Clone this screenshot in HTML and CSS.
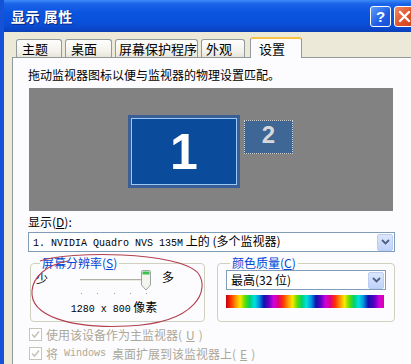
FILE: index.html
```html
<!DOCTYPE html>
<html lang="zh-CN">
<head>
<meta charset="utf-8">
<title>显示 属性</title>
<link rel="stylesheet" href="styles.css">
</head>
<body>
<div class="window">
  <div class="titlebar">
    <span class="title">显示 属性</span>
    <div class="tbtns">
      <span class="tbtn help">?</span>
      <span class="tbtn close">
        <svg width="19" height="19" viewBox="0 0 19 19"><path d="M5 5 L14 14 M14 5 L5 14" stroke="#fff" stroke-width="2.4" stroke-linecap="round"/></svg>
      </span>
    </div>
  </div>
  <div class="content">
    <div class="tabs">
      <span class="tab w1">主题</span>
      <span class="tab w2">桌面</span>
      <span class="tab w3">屏幕保护程序</span>
      <span class="tab w4">外观</span>
      <span class="tab active">设置</span>
    </div>
    <div class="panel">
      <p class="hint">拖动监视器图标以便与监视器的物理设置匹配。</p>
      <div class="canvas">
        <div class="mon1"><div class="mon1-inner">1</div></div>
        <div class="mon2">2</div>
      </div>
      <div class="label">显示(<u>D</u>):</div>
      <div class="select wide">
        <span class="sel-text"><span class="mono">1. NVIDIA Quadro NVS 135M</span> 上的 (多个监视器)</span>
        <span class="drop"><svg width="9" height="6" viewBox="0 0 9 6"><path d="M1 1 L4.5 4.5 L8 1" fill="none" stroke="#4d6185" stroke-width="1.8"/></svg></span>
      </div>
      <div class="groups">
        <fieldset class="group">
          <legend>屏幕分辨率(<u>S</u>)</legend>
          <div class="slider-row">
            <span class="lo">少</span>
            <div class="slider">
              <div class="track"></div>
              <div class="thumb"><svg width="10" height="21" viewBox="0 0 10 21"><path d="M0.5 1.5 Q0.5 0.5 1.5 0.5 H8.5 Q9.5 0.5 9.5 1.5 V15 L5 20 L0.5 15 Z" fill="#f4f4ee" stroke="#9aa5a0"/><rect x="1.5" y="1.5" width="7" height="3" fill="#3fbf4f"/></svg></div>
              <div class="ticks"><i></i><i></i><i></i><i></i><i></i></div>
            </div>
            <span class="hi">多</span>
          </div>
          <div class="res"><span class="mono">1280 x 800</span> 像素</div>
        </fieldset>
        <fieldset class="group">
          <legend>颜色质量(<u>C</u>)</legend>
          <div class="select small">
            <span class="sel-text">最高(32 位)</span>
            <span class="drop"><svg width="9" height="6" viewBox="0 0 9 6"><path d="M1 1 L4.5 4.5 L8 1" fill="none" stroke="#4d6185" stroke-width="1.8"/></svg></span>
          </div>
          <div class="spectrum"></div>
        </fieldset>
      </div>
      <div class="check"><span class="box"><svg width="11" height="11" viewBox="0 0 11 11"><path d="M2 5.5 L4.5 8 L9 2.5" fill="none" stroke="#c6c4b8" stroke-width="1.6"/></svg></span>使用该设备作为主监视器(<u>U</u>)</div>
      <div class="check"><span class="box"><svg width="11" height="11" viewBox="0 0 11 11"><path d="M2 5.5 L4.5 8 L9 2.5" fill="none" stroke="#c6c4b8" stroke-width="1.6"/></svg></span>将 <span class="mono">Windows</span> 桌面扩展到该监视器上(<u>E</u>)</div>
    </div>
  </div>
  <svg class="ring" width="180" height="80" viewBox="0 0 180 80"><path d="M12 8 C 40 -2, 150 -2, 170 20 C 182 36, 170 70, 100 73 C 40 76, 2 62, 4 38 C 5 24, 18 12, 40 8" fill="none" stroke="#b24050" stroke-width="1.1"/></svg>
</div>
</body>
</html>
```

FILE: styles.css
```css
* { box-sizing: border-box; }
html, body { margin: 0; padding: 0; }
body {
  width: 411px;
  height: 364px;
  overflow: hidden;
  font-family: "Noto Sans CJK SC", "Liberation Sans", sans-serif;
  font-size: 12px;
  color: #000;
  background: #ece9d8;
}
u { text-decoration: underline; }
.mono { font-family: "Liberation Mono", monospace; font-size: 10px; }
.window {
  position: relative;
  width: 411px;
  height: 364px;
  background: #ece9d8;
  border-left: 4px solid #1652d8;
  overflow: hidden;
}
.titlebar {
  height: 32px;
  display: flex;
  align-items: flex-start;
  justify-content: space-between;
  background: linear-gradient(to bottom, #3b8cf7 0%, #1b63e8 12%, #0a55e0 40%, #0a4fd8 75%, #0a45c6 92%, #0a3fb5 100%);
  margin-left: -4px;
  width: 411px;
  padding-left: 11px;
}
.title {
  color: #fff;
  font-weight: bold;
  font-size: 14px;
  line-height: 32px;
  text-shadow: 1px 1px 0 #0a2a80;
  letter-spacing: 0.5px;
}
.tbtns { display: flex; gap: 3px; margin-top: 6px; margin-right: -4px; }
.tbtn {
  width: 21px;
  height: 21px;
  border: 1px solid #fff;
  border-radius: 3px;
  display: flex;
  align-items: center;
  justify-content: center;
  color: #fff;
  font-family: "Liberation Sans", sans-serif;
  font-weight: bold;
  font-size: 15px;
}
.help { background: linear-gradient(135deg, #5f9bf8, #1d5ee6 60%, #1a4fd0); }
.close { background: linear-gradient(135deg, #f08a6a, #e0542a 55%, #c9401c); }
.content { padding: 5px 0 0 8px; }
.tabs { display: flex; align-items: flex-end; height: 20px; padding-left: 4px; gap: 3px; }
.tab {
  height: 18px;
  display: flex;
  align-items: center;
  padding-left: 5px;
  font-size: 13px;
  border: 1px solid #919b9c;
  border-bottom: none;
  border-radius: 3px 3px 0 0;
  background: linear-gradient(to bottom, #fefefe, #f2f1ea 70%, #e6e4da);
  line-height: 1;
}
.w1 { width: 46px; }
.w2 { width: 47px; }
.w3 { width: 83px; padding-left: 3px; }
.w4 { width: 44px; padding-left: 4px; margin-right: 2px; }
.tab.active {
  width: 52px;
  height: 21px;
  padding-left: 8px;
  background: #fcfcfe;
  border-top: 2px solid #f5c14a;
  margin-bottom: -1px;
  position: relative;
}
.panel {
  background: #fcfcfe;
  border: 1px solid #919b9c;
  width: 400px;
  height: 320px;
  padding: 9px 0 0 15px;
}
.hint { margin: 0; height: 16px; line-height: 16px; }
.canvas {
  position: relative;
  width: 364px;
  height: 123px;
  margin-top: 5px;
  margin-left: 1px;
  background: #828282;
}
.mon1 {
  position: absolute;
  left: 99px;
  top: 27px;
  width: 112px;
  height: 73px;
  background: #3a5f96;
  padding: 3px;
}
.mon1-inner {
  width: 100%;
  height: 100%;
  background: #0b4b9b;
  border: 1px solid #9cc9f4;
  color: #fff;
  font-family: "Liberation Sans", sans-serif;
  font-weight: bold;
  font-size: 50px;
  display: flex;
  align-items: center;
  justify-content: center;
  line-height: 1;
}
.mon2 {
  position: absolute;
  left: 215px;
  top: 32px;
  width: 49px;
  height: 34px;
  background: #3e6796;
  border: 1px dotted #d2d2d2;
  color: #d8d8d8;
  font-family: "Liberation Sans", sans-serif;
  font-weight: bold;
  font-size: 24px;
  display: flex;
  align-items: center;
  justify-content: center;
  line-height: 1;
  padding-bottom: 4px;
}
.label { margin-top: 2px; height: 18px; line-height: 18px; }
.select {
  display: flex;
  align-items: center;
  justify-content: space-between;
  height: 20px;
  border: 1px solid #7f9db9;
  background: #fff;
  padding: 0 1px 0 4px;
}
.select.wide { width: 367px; margin-top: 1px; }
.sel-text { font-size: 12px; line-height: 18px; white-space: nowrap; }
.drop {
  width: 16px;
  height: 17px;
  border-radius: 2px;
  background: linear-gradient(to bottom, #dce7fd, #bfd2fa);
  border: 1px solid #b9cdf6;
  display: flex;
  align-items: center;
  justify-content: center;
}
.groups { display: flex; gap: 12px; margin-top: 4px; margin-left: 2px; }
.group {
  margin: 0;
  border: 1px solid #d0d0bf;
  border-radius: 4px;
  padding: 0 8px;
  height: 66px;
}
.group:first-child { width: 175px; padding-left: 5px; }
.group:last-child { width: 178px; }
.group legend {
  color: #0046d5;
  padding: 0 2px;
  margin-left: 4px;
  font-size: 12px;
  line-height: 14px;
}
.slider-row { display: flex; align-items: flex-start; height: 28px; }
.lo { width: 40px; }
.slider { position: relative; width: 86px; height: 28px; }
.track {
  position: absolute;
  left: 4px;
  top: 9px;
  width: 68px;
  height: 3px;
  border-top: 1px solid #b0b0a8;
  border-bottom: 1px solid #fff;
  background: #e8e8e0;
}
.thumb { position: absolute; left: 65px; top: 0; line-height: 0; }
.ticks { position: absolute; left: 5px; top: 23px; width: 66px; display: flex; justify-content: space-between; }
.ticks i { width: 1px; height: 1px; background: #a0a0a0; display: block; }
.hi { margin-top: -2px; }
.res { text-align: center; height: 16px; line-height: 16px; margin-top: 1px; padding-right: 4px; }
.select.small { width: 160px; }
.spectrum {
  margin-top: 5px;
  width: 158px;
  height: 13px;
  background: linear-gradient(to right,
    #c00010 0%, #ff3000 3%, #ff9000 6%, #f8e800 9%, #60e000 12%, #00d070 15%, #00e0e0 18%, #0090e0 21%, #1010b0 24%, #6000c0 27%, #d000e0 30%, #e00080 33%,
    #ff3000 36%, #ff9000 39%, #f8e800 42%, #60e000 45%, #00d070 48%, #00e0e0 51%, #0090e0 54%, #1010b0 57%, #6000c0 60%, #d000e0 63%, #e00080 66%,
    #ff3000 69%, #ff9000 72%, #f8e800 75%, #60e000 78%, #00d070 81%, #00e0e0 84%, #0090e0 87%, #1010b0 90%, #6000c0 94%, #d000e0 97%, #e000a0 100%);
}
.check {
  display: flex;
  align-items: center;
  gap: 4px;
  height: 19px;
  color: #aca899;
  font-size: 12px;
  margin-left: 1px;
}
.groups + .check { margin-top: 3px; }
.check .mono { color: #aca899; margin: 0 2px; }
.box {
  width: 13px;
  height: 13px;
  border: 1px solid #c6c4b8;
  background: #fff;
  display: flex;
  align-items: center;
  justify-content: center;
}
.ring { position: absolute; left: 24px; top: 253px; }
```
